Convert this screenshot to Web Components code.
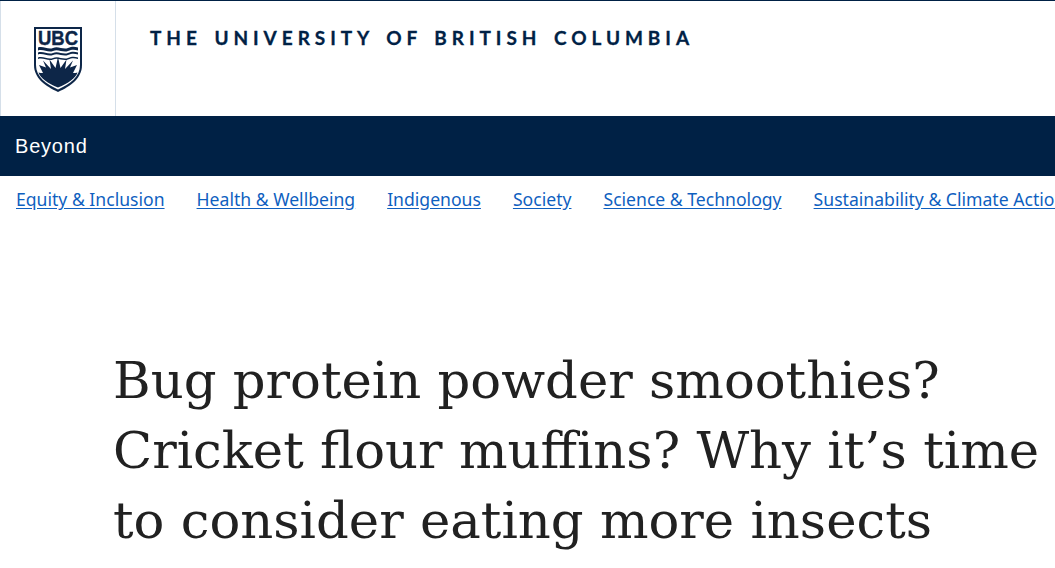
<!DOCTYPE html>
<html lang="en">
<head>
<meta charset="utf-8">
<title>Beyond</title>
<style>
  html, body { margin: 0; padding: 0; background: #fff; overflow: hidden; height: 568px; }
</style>
</head>
<body>
<ubc-header>THE UNIVERSITY OF BRITISH COLUMBIA</ubc-header>
<site-bar>Beyond</site-bar>
<topic-nav>
  <a href="#">Equity &amp; Inclusion</a>
  <a href="#">Health &amp; Wellbeing</a>
  <a href="#">Indigenous</a>
  <a href="#">Society</a>
  <a href="#">Science &amp; Technology</a>
  <a href="#">Sustainability &amp; Climate Action</a>
</topic-nav>
<article-title>Bug protein powder smoothies?<br>Cricket flour muffins? Why it’s time<br>to consider eating more insects</article-title>

<script>
class UbcHeader extends HTMLElement {
    constructor() {
        super();
        this.attachShadow({mode: 'open'});
    }
    connectedCallback() {
        this.shadowRoot.innerHTML = `
        <style>
            :host { display: flex; height: 115px; border-top: 1px solid #002145; background: #fff; }
            .logo {
                width: 114px;
                flex: none;
                border-left: 1px solid #d5dfe9;
                border-right: 1px solid #d5dfe9;
                display: flex;
                justify-content: center;
                padding-top: 26px;
            }
            svg { width: 48px; height: 65px; display: block; }
            .wordmark {
                margin-left: 34px;
                padding-top: 26px;
                font: 700 19px/22px Lato, sans-serif;
                -webkit-text-stroke: 0.3px #002145;
                letter-spacing: 4.95px;
                word-spacing: 3px;
                color: #002145;
                white-space: nowrap;
            }
        </style>
        <div class="logo">
            <svg viewBox="0 0 48 65" aria-label="UBC">
                <path d="M0 0H48V38C48 51 37 59 24 65C11 59 0 51 0 38Z" fill="#0d2648"/>
                <path d="M2 2H46V38C46 50 36 57 24 62.500C12 57 2 50 2 38Z" fill="#fff"/>
                <text x="24" y="18" text-anchor="middle" font-family="Liberation Sans" font-weight="700" font-size="20" textLength="40" lengthAdjust="spacingAndGlyphs" stroke="#0d2648" stroke-width="0.4" fill="#0d2648">UBC</text>
                <path d="M4 20.500C9 18.500 14 23 19 21C24 18.500 29 23 34 21C38 19 41 19.500 44 20.500V23.500C41 22.500 38 22 34 24C29 26 24 21.500 19 24C14 26 9 21.500 4 23.500Z" fill="#0d2648"/>
                <path d="M4 25.500C9 23.500 14 28 19 26C24 23.500 29 28 34 26C38 24 41 24.500 44 25.500V27.500C41 26.500 38 26 34 28C29 30 24 25.500 19 28C14 30 9 25.500 4 27.500Z" fill="#0d2648"/>
                <path d="M4 30.500C9 28.500 14 33 19 31C24 28.500 29 33 34 31C38 29 41 29.500 44 30.500V32C41 31 38 30.500 34 32.500C29 34.500 24 30 19 32.500C14 34.500 9 30 4 32Z" fill="#0d2648"/>
                <path d="M5 38L12 40.500L9 33.500L17 42L15.500 32.500L21.500 41L24 30L26.500 41L32.500 32.500L31 42L39 33.500L36 40.500L43 38L39 46C41 46 42 46 43.500 45.500C42 51 34 56.500 24 60.500C14 56.500 6 51 4.500 45.500C6 46 7 46 9 46Z" fill="#0d2648"/>
            </svg>
        </div>
        <div class="wordmark"><slot></slot></div>
        `;
    }
}

class SiteBar extends HTMLElement {
    constructor() {
        super();
        this.attachShadow({mode: 'open'});
    }
    connectedCallback() {
        this.shadowRoot.innerHTML = `
        <style>
            :host {
                display: flex;
                align-items: center;
                height: 60px;
                padding-left: 15px;
                background: #002145;
                color: #fff;
                font: 400 20px/24px "Liberation Sans", sans-serif;
                letter-spacing: 0.8px;
            }
        </style>
        <slot></slot>
        `;
    }
}

class TopicNav extends HTMLElement {
    constructor() {
        super();
        this.attachShadow({mode: 'open'});
    }
    connectedCallback() {
        this.shadowRoot.innerHTML = `
        <style>
            :host {
                display: flex;
                gap: 32px;
                height: 46px;
                padding-left: 16px;
                align-items: center;
                white-space: nowrap;
                overflow: hidden;
                font: 400 17.6px/24px "Noto Sans", sans-serif;
            }
            ::slotted(a) { color: #0f5fbf; text-decoration: underline; text-underline-offset: 2px; }
        </style>
        <slot></slot>
        `;
    }
}

class ArticleTitle extends HTMLElement {
    constructor() {
        super();
        this.attachShadow({mode: 'open'});
    }
    connectedCallback() {
        this.shadowRoot.innerHTML = `
        <style>
            :host {
                display: block;
                padding: 123px 0 0 113px;
                box-sizing: border-box;
            }
            h1 {
                margin: 0;
                font: 400 51.25px/70px "DejaVu Serif", serif;
                color: #212121;
                white-space: nowrap;
            }
        </style>
        <h1><slot></slot></h1>
        `;
    }
}

customElements.define('ubc-header', UbcHeader);
customElements.define('site-bar', SiteBar);
customElements.define('topic-nav', TopicNav);
customElements.define('article-title', ArticleTitle);
</script>
</body>
</html>
